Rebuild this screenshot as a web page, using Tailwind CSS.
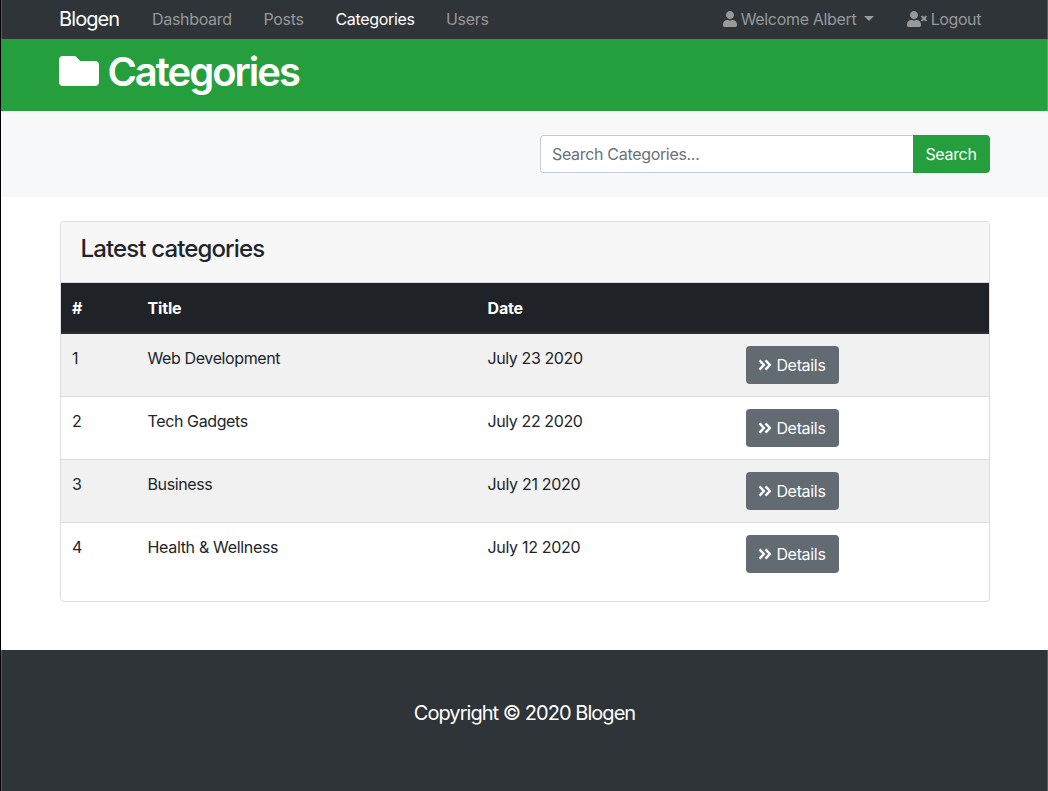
<!DOCTYPE html>
<html lang="en">
<head>
<meta charset="utf-8">
<title>Blogen</title>
<script src="https://cdn.jsdelivr.net/npm/@tailwindcss/browser@4"></script>
</head>
<body class="h-[791px] overflow-hidden border-l border-black bg-white font-['Inter','Liberation_Sans',sans-serif] text-base leading-6 tracking-[-0.02em] text-[#212529]">
<nav class="flex h-[39px] items-center justify-between border-x border-x-[#5a5d60] bg-[#2e3438] pb-px pl-[57px] pr-[67px] text-[#97999b]">
  <div class="flex items-center">
    <a class="w-[93px] text-xl tracking-[-0.045em] text-white">Blogen</a>
    <a class="w-[111.500px]">Dashboard</a>
    <a class="w-[72px]">Posts</a>
    <a class="w-[110.500px] text-white">Categories</a>
    <a>Users</a>
  </div>
  <div class="flex items-center">
    <a class="flex w-[184px] items-center">
      <svg class="mr-1 h-4 w-[14px]" viewBox="0 0 448 512" fill="currentColor"><path d="M224 256c70.700 0 128-57.300 128-128S294.700 0 224 0 96 57.300 96 128s57.300 128 128 128zm89.600 32h-16.700c-22.200 10.200-46.900 16-72.900 16s-50.600-5.800-72.900-16h-16.700C60.200 288 0 348.200 0 422.400V464c0 26.500 21.500 48 48 48h352c26.500 0 48-21.500 48-48v-41.600c0-74.200-60.200-134.400-134.400-134.400z"/></svg>
      <span class="whitespace-nowrap">Welcome Albert</span>
      <span class="mb-0.5 ml-2 border-x-[5px] border-t-[5px] border-x-transparent border-t-current"></span>
    </a>
    <a class="-mr-px flex items-center tracking-[-0.025em]">
      <svg class="mr-1 h-4 w-5" viewBox="0 0 640 512" fill="currentColor"><path d="M589.600 240l45.600-45.600c6.300-6.300 6.300-16.500 0-22.800l-22.800-22.800c-6.300-6.300-16.500-6.300-22.800 0L544 194.400l-45.600-45.600c-6.300-6.300-16.500-6.300-22.800 0l-22.800 22.800c-6.300 6.300-6.300 16.500 0 22.800l45.600 45.600-45.600 45.600c-6.300 6.300-6.300 16.500 0 22.800l22.800 22.800c6.300 6.300 16.500 6.300 22.800 0l45.600-45.600 45.600 45.600c6.300 6.300 16.500 6.300 22.800 0l22.800-22.800c6.300-6.300 6.300-16.500 0-22.800L589.600 240zM224 256c70.700 0 128-57.300 128-128S294.700 0 224 0 96 57.300 96 128s57.300 128 128 128zm89.600 32h-16.700c-22.200 10.200-46.900 16-72.900 16s-50.600-5.800-72.900-16h-16.700C60.200 288 0 348.200 0 422.400V464c0 26.500 21.500 48 48 48h352c26.500 0 48-21.500 48-48v-41.600c0-74.200-60.200-134.400-134.400-134.400z"/></svg>
      <span>Logout</span>
    </a>
  </div>
</nav>
<header class="flex h-[72px] border-r border-r-[#5cac6c] bg-[#259f3d] pl-[58.400px] pt-[9px] text-white">
  <svg class="mr-2 mt-[3px] h-10 w-10" viewBox="0 0 512 512" fill="currentColor"><path d="M464 128H272l-64-64H48C21.500 64 0 85.500 0 112v288c0 26.500 21.500 48 48 48h416c26.500 0 48-21.500 48-48V176c0-26.500-21.500-48-48-48z"/></svg>
  <h1 class="text-[40px] font-semibold leading-[48px] tracking-[-0.05em]">Categories</h1>
</header>
<section class="flex h-[86px] items-start justify-end bg-[#f7f8fa] pr-[58px] pt-6">
  <div class="flex h-[38px] w-[450px]">
    <input class="h-[38px] min-w-0 flex-1 rounded-l border border-r-0 border-[#c7cdd4] bg-white px-[11px] tracking-[-0.02em] placeholder:text-[#69717a]" placeholder="Search Categories...">
    <button class="w-[77px] rounded-r bg-[#259f3d] pr-px tracking-[-0.02em] text-white">Search</button>
  </div>
</section>
<main class="h-[453px] pl-[59px] pr-[58px] pt-6">
  <div class="h-[381px] overflow-hidden rounded border border-[#dcddde]">
    <div class="h-[61px] border-b border-[#d4d5d6] bg-[#f7f7f7] pl-[19.500px] pt-3">
      <h4 class="text-2xl font-medium leading-[29px] tracking-[-0.036em]">Latest categories</h4>
    </div>
    <table class="w-full table-fixed border-separate border-spacing-0 text-left align-top">
      <colgroup><col class="w-[75px]"><col class="w-[340px]"><col class="w-[258px]"><col></colgroup>
      <thead class="bg-[#1f2327] text-white">
        <tr class="h-[51px]">
          <th class="border-b-2 border-[#2b3035] pl-[11px] pt-px font-bold">#</th>
          <th class="border-b-2 border-[#2b3035] pl-[11.500px] pt-px font-bold tracking-[-0.01em]">Title</th>
          <th class="border-b-2 border-[#2b3035] pl-[11.500px] pt-px font-bold tracking-[-0.01em]">Date</th>
          <th class="border-b-2 border-[#2b3035]"></th>
        </tr>
      </thead>
      <tbody class="align-top">
        <tr class="bg-[#f1f1f1]">
          <td class="py-3 pl-[11px]">1</td><td class="py-3 pl-[11.500px] tracking-[-0.024em]">Web Development</td><td class="py-3 pl-[11.500px] tracking-[-0.025em]">July 23 2020</td>
          <td class="py-3 pl-3"><a class="flex h-[38px] w-[93px] items-center rounded bg-[#626a72] pl-[12.400px] text-white"><svg class="mr-1 h-4 w-[14px]" viewBox="0 0 448 512" fill="none" stroke="currentColor" stroke-width="80" stroke-linejoin="round"><path d="M48 110l142 146L48 402M240 110l142 146-142 146"/></svg>Details</a></td>
        </tr>
        <tr>
          <td class="border-t border-[#d9dee2] py-3 pl-[11px]">2</td><td class="border-t border-[#d9dee2] py-3 pl-[11.500px] tracking-[-0.024em]">Tech Gadgets</td><td class="border-t border-[#d9dee2] py-3 pl-[11.500px] tracking-[-0.025em]">July 22 2020</td>
          <td class="border-t border-[#d9dee2] py-3 pl-3"><a class="flex h-[38px] w-[93px] items-center rounded bg-[#626a72] pl-[12.400px] text-white"><svg class="mr-1 h-4 w-[14px]" viewBox="0 0 448 512" fill="none" stroke="currentColor" stroke-width="80" stroke-linejoin="round"><path d="M48 110l142 146L48 402M240 110l142 146-142 146"/></svg>Details</a></td>
        </tr>
        <tr class="bg-[#f1f1f1]">
          <td class="border-t border-[#d9dee2] py-3 pl-[11px]">3</td><td class="border-t border-[#d9dee2] py-3 pl-[11.500px] tracking-[-0.024em]">Business</td><td class="border-t border-[#d9dee2] py-3 pl-[11.500px]">July 21 2020</td>
          <td class="border-t border-[#d9dee2] py-3 pl-3"><a class="flex h-[38px] w-[93px] items-center rounded bg-[#626a72] pl-[12.400px] text-white"><svg class="mr-1 h-4 w-[14px]" viewBox="0 0 448 512" fill="none" stroke="currentColor" stroke-width="80" stroke-linejoin="round"><path d="M48 110l142 146L48 402M240 110l142 146-142 146"/></svg>Details</a></td>
        </tr>
        <tr>
          <td class="border-t border-[#d9dee2] py-3 pl-[11px]">4</td><td class="border-t border-[#d9dee2] py-3 pl-[11.500px]">Health &amp; Wellness</td><td class="border-t border-[#d9dee2] py-3 pl-[11.500px]">July 12 2020</td>
          <td class="border-t border-[#d9dee2] py-3 pl-3"><a class="flex h-[38px] w-[93px] items-center rounded bg-[#626a72] pl-[12.400px] text-white"><svg class="mr-1 h-4 w-[14px]" viewBox="0 0 448 512" fill="none" stroke="currentColor" stroke-width="80" stroke-linejoin="round"><path d="M48 110l142 146L48 402M240 110l142 146-142 146"/></svg>Details</a></td>
        </tr>
      </tbody>
    </table>
  </div>
</main>
<footer class="h-[141px] border-x border-x-[#5a5d60] bg-[#2e3438] pt-12 text-center text-white">
  <p class="text-xl leading-[30px] tracking-[-0.048em]">Copyright © 2020 Blogen</p>
</footer>
</body>
</html>
